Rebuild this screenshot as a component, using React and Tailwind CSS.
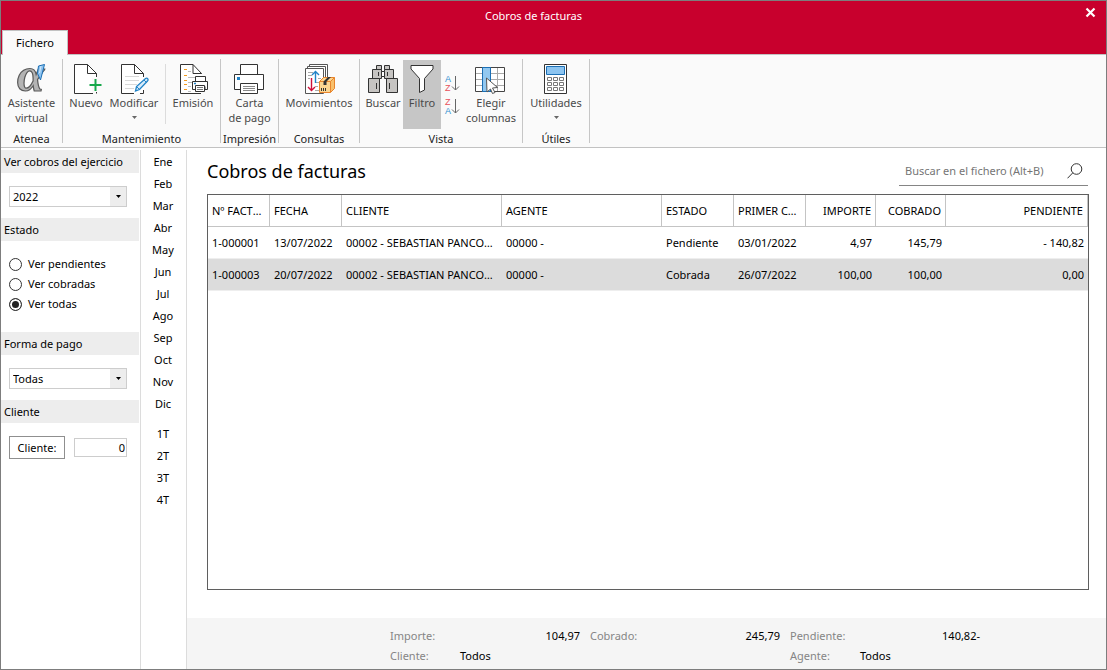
import { useState } from 'react';

const MONTHS = [
  'Ene',
  'Feb',
  'Mar',
  'Abr',
  'May',
  'Jun',
  'Jul',
  'Ago',
  'Sep',
  'Oct',
  'Nov',
  'Dic',
];
const QUARTERS = ['1T', '2T', '3T', '4T'];

const COLUMNS = [
  { key: 'num', label: 'Nº FACTURA', width: 'w-[62px]' },
  { key: 'fecha', label: 'FECHA', width: 'w-[72px]' },
  { key: 'cliente', label: 'CLIENTE', width: 'w-[160px]' },
  { key: 'agente', label: 'AGENTE', width: 'w-[160px]' },
  { key: 'estado', label: 'ESTADO', width: 'w-[72px]' },
  { key: 'primer', label: 'PRIMER COBRO', width: 'w-[72px]' },
  { key: 'importe', label: 'IMPORTE', width: 'w-[70px]', right: true },
  { key: 'cobrado', label: 'COBRADO', width: 'w-[70px]', right: true },
  { key: 'pendiente', label: 'PENDIENTE', width: '', right: true },
];

const ROWS = [
  {
    num: '1-000001',
    fecha: '13/07/2022',
    cliente: '00002 - SEBASTIAN PANCORBO',
    agente: '00000 -',
    estado: 'Pendiente',
    primer: '03/01/2022',
    importe: '4,97',
    cobrado: '145,79',
    pendiente: '- 140,82',
  },
  {
    num: '1-000003',
    fecha: '20/07/2022',
    cliente: '00002 - SEBASTIAN PANCORBO',
    agente: '00000 -',
    estado: 'Cobrada',
    primer: '26/07/2022',
    importe: '100,00',
    cobrado: '100,00',
    pendiente: '0,00',
  },
];

function Icon({ children }) {
  return (
    <svg
      className="h-[30px] w-8 shrink-0 overflow-visible"
      viewBox="0 0 32 30"
      fill="none"
      aria-hidden="true"
    >
      {children}
    </svg>
  );
}

function AlphaIcon() {
  return (
    <Icon>
      <text
        x="1"
        y="27"
        fontFamily="'Liberation Serif', serif"
        fontWeight="bold"
        fontStyle="italic"
        fontSize="49"
        fill="#b4b4b4"
        stroke="#5a5a5a"
        strokeWidth="1.2"
      >
        α
      </text>
      <path d="M22.5 2L28.5 .5L24.5 16L21.5 9.5Z" fill="#8fc4f0" stroke="#1b6fb5" />
      <path d="M25 2L23.5 9" stroke="#d7ebfa" />
    </Icon>
  );
}

function NewIcon() {
  return (
    <Icon>
      <path d="M4.5.5H17.5L26.5 9.5V14H22V29.5H4.5Z" fill="#fff" />
      <path d="M23 29.5H4.5V.5H17.5L26.5 9.5V13M17.5.5V9.5H26.5M26.5 28V29.5" stroke="#333" />
      <path d="M25.5 15V27M19.5 21H31.5" stroke="#17a84b" strokeWidth="2" />
    </Icon>
  );
}

function EditIcon() {
  return (
    <Icon>
      <path d="M3.5.5H16.5L25.5 9.5V29.5H3.5Z" fill="#fff" />
      <path d="M7 12.5H21M7 16.5H21M7 20.5H19M7 24.5H16" stroke="#d8d8d8" />
      <path d="M16 29.5H3.5V.5H16.5L25.5 9.5V13M25.5 26V29.5H22M16.5.5V9.5H25.5" stroke="#333" />
      <path
        d="M17.5 27L18.5 22.5L27.5 14.5C29.5 13.5 31 15.5 29.5 17L21.5 25.5Z"
        fill="#d7ebfa"
        stroke="#2183c7"
        strokeWidth="1.3"
      />
      <path d="M26 16L28.5 18.5M18.5 22.5L21.5 25.5" stroke="#2183c7" />
    </Icon>
  );
}

function EmisionIcon() {
  return (
    <Icon>
      <path d="M3.5.5H16L24.5 9.5V29.5H3.5Z" fill="#fff" />
      <path d="M7 5.5H10M7 11.5H10M7 16.5H10M7 20.5H10M7 25.5H10" stroke="#f39a1e" />
      <path d="M11 7.5H14M11 13.5H19M11 18.5H15M11 22.5H14M11 27.5H14" stroke="#bdbdbd" />
      <path d="M24 29.5H3.5V.5H16L24.5 9.5V10M16 .5V9.5H24.5" stroke="#333" />
      <path d="M18.5 18V12.5H28.5V18" fill="#fff" stroke="#333" />
      <path d="M15.5 17.5H30.5V25.5H28V22.5H19V25.5H15.5Z" fill="#fff" stroke="#333" />
      <path d="M18.5 21.5H27.5V27.5H18.5Z" fill="#fff" stroke="#333" />
      <path d="M20 23.5H26M20 25.5H26" stroke="#777" />
      <path d="M17 19.5H19" stroke="#2183c7" strokeWidth="1.5" />
    </Icon>
  );
}

function PrinterIcon() {
  return (
    <Icon>
      <path d="M6.5 11V.5H23.5V11" fill="#fff" stroke="#333" />
      <path d="M.5 10.5H29.5V25.5H.5Z" fill="#fff" stroke="#333" />
      <path d="M6.5 19.5H23.5V29.5H6.5Z" fill="#fff" stroke="#333" />
      <path d="M9 22.5H21M9 24.5H21M9 26.5H21" stroke="#8a8a8a" />
      <path d="M3 13H6V16H3Z" fill="#2183c7" />
    </Icon>
  );
}

function MovesIcon() {
  return (
    <Icon>
      <path d="M6.5.5H24.5V26H6.5Z" fill="#fff" stroke="#555" />
      <path d="M4.5 2.5H22.5V28H4.5Z" fill="#fff" stroke="#555" />
      <path d="M2.5 4.5H20.5V29.5H2.5Z" fill="#fff" stroke="#555" />
      <path
        d="M5 8.5H10M5 11.5H9M5 14.5H7M15 14.5H18M12 18.5H17M12 22.5H15M12 26.5H16"
        stroke="#aaa"
      />
      <path d="M12.5 19V7.5M9 11L12.5 7.5L16 11" stroke="#2183c7" strokeWidth="1.4" />
      <path d="M8.5 14V26.5M5 23L8.5 26.5L12 23" stroke="#d0103a" strokeWidth="1.4" />
      <path d="M16.5 17.5L20.5 13.5H31.5V24.5L27.5 28.5H16.5Z" fill="#fbd591" />
      <path d="M27.5 17.5L31.5 13.5V24.5L27.5 28.5Z" fill="#f8c06c" />
      <path
        d="M16.5 17.5L20.5 13.5H31.5V24.5L27.5 28.5H16.5ZM16.5 17.5H27.5V28.5M27.5 17.5L31.5 13.5"
        stroke="#e8852c"
        strokeLinejoin="round"
      />
      <path d="M25 13H28L23.5 17.5V21H20.5V17.5Z" fill="#333" />
      <path d="M18.5 24V27M20.5 24V27M22.5 24V27" stroke="#333" />
    </Icon>
  );
}

function BinocularsIcon() {
  return (
    <Icon>
      <g fill="#c6c4c2" stroke="#333">
        <path d="M9.5 1.5H14.5V5.5H9.5ZM17.5 1.5H22.5V5.5H17.5Z" />
        <path d="M5.5 5.5H14.5V14.5H5.5ZM17.5 5.5H26.5V14.5H17.5Z" />
        <path d="M14.5 7.5H17.5V12.5H14.5Z" fill="#fff" />
        <path d="M1.5 14.5H12.5V28.5H1.5ZM19.5 14.5H30.5V28.5H19.5Z" />
        <path d="M9.5 19V25M22.5 19V25M11.5 8V12M20.5 8V12" />
      </g>
    </Icon>
  );
}

function FilterIcon() {
  return (
    <Icon>
      <path
        d="M5 1.5H27V5L18.5 14.5V26L13.5 28.5V14.5L5 5Z"
        fill="#fff"
        stroke="#333"
      />
    </Icon>
  );
}

function ColumnsIcon() {
  return (
    <Icon>
      <path d="M.5 3.5H29.5V27.5H.5Z" fill="#fff" />
      <path d="M.5 9.5H29.5M.5 15.5H29.5M.5 21.5H29.5M22.5 3.5V27.5" stroke="#aaa" />
      <path d="M.5 3.5H29.5V27.5H.5Z" stroke="#444" />
      <path d="M7.5 3.5H15.5V27.5H7.5Z" fill="#92c8f0" stroke="#1b6fb5" />
      <path
        d="M11.5 14L22.5 23.5L17.5 24L20 28.5L17.5 29.5L15.5 25L12 28Z"
        fill="#fff"
        stroke="#555"
      />
    </Icon>
  );
}

function CalculatorIcon() {
  return (
    <Icon>
      <path d="M4.5.5H26.5V29.5H4.5Z" fill="#fff" stroke="#333" />
      <path d="M6.5 2.5H24.5V10.5H6.5Z" fill="#8cc4f0" stroke="#1b6fb5" />
      <g fill="#fff" stroke="#777">
        <path d="M7.5 13.5H11.5V16.5H7.5ZM13.5 13.5H17.5V16.5H13.5ZM19.5 13.5H23.5V16.5H19.5Z" />
        <path d="M7.5 18.5H11.5V21.5H7.5ZM13.5 18.5H17.5V21.5H13.5ZM19.5 18.5H23.5V21.5H19.5Z" />
        <path d="M7.5 23.5H11.5V26.5H7.5ZM13.5 23.5H17.5V26.5H13.5ZM19.5 23.5H23.5V26.5H19.5Z" />
      </g>
    </Icon>
  );
}

function SortIcon({ top, bottom, topColor, bottomColor }) {
  return (
    <svg
      className="h-[17px] w-4 overflow-visible"
      viewBox="0 0 16 17"
      fill="none"
      aria-hidden="true"
    >
      <g fontFamily="'Liberation Sans', sans-serif" fontSize="9">
        <text x="1" y="7" fill={topColor}>
          {top}
        </text>
        <text x="1" y="16" fill={bottomColor}>
          {bottom}
        </text>
      </g>
      <path d="M11.5 1V15M8 11.5L11.5 15L15 11.5" stroke="#666" />
    </svg>
  );
}

function RibbonGroup({ label, width, children }) {
  return (
    <section
      aria-label={label}
      className={`flex h-[84px] shrink-0 flex-col border-r border-[#c6c6c6] pt-px ${width}`}
    >
      <div className="flex h-[69px] shrink-0 justify-center">{children}</div>
      <div className="mt-1 text-center leading-3 whitespace-nowrap text-[#222]">{label}</div>
    </section>
  );
}

function RibbonButton({ icon, lines, width, arrow, active }) {
  return (
    <button
      type="button"
      className={`flex flex-col items-center pt-1 whitespace-nowrap text-[#4a4a4a] ${width} ${
        active ? 'bg-[#c6c6c6]' : 'hover:bg-[#ececec]'
      }`}
    >
      {icon}
      <span className="mt-px leading-[15px]">
        {lines.map(line => (
          <span className="block" key={line}>
            {line}
          </span>
        ))}
      </span>
      {arrow && (
        <svg className="mt-1.5 h-[3px] w-[5px]" viewBox="0 0 5 3" aria-hidden="true">
          <path d="M0 0H5L2.5 3Z" fill="#666" />
        </svg>
      )}
    </button>
  );
}

function Ribbon() {
  return (
    <div className="flex h-[94px] shrink-0 border-y border-[#c2c2c2] bg-[#fafafa] pt-1">
      <RibbonGroup label="Atenea" width="w-[62px]">
        <RibbonButton icon={<AlphaIcon />} lines={['Asistente', 'virtual']} width="w-full" />
      </RibbonGroup>
      <RibbonGroup label="Mantenimiento" width="w-[158px]">
        <RibbonButton icon={<NewIcon />} lines={['Nuevo']} width="w-[46px]" />
        <RibbonButton icon={<EditIcon />} lines={['Modificar']} width="w-[50px]" arrow />
        <div className="mt-1 ml-1.5 h-[60px] w-px bg-[#dcdcdc]" />
        <RibbonButton icon={<EmisionIcon />} lines={['Emisión']} width="w-[54px]" />
      </RibbonGroup>
      <RibbonGroup label="Impresión" width="w-[58px]">
        <RibbonButton icon={<PrinterIcon />} lines={['Carta', 'de pago']} width="w-full" />
      </RibbonGroup>
      <RibbonGroup label="Consultas" width="w-[81px]">
        <RibbonButton icon={<MovesIcon />} lines={['Movimientos']} width="w-full" />
      </RibbonGroup>
      <RibbonGroup label="Vista" width="w-[163px]">
        <RibbonButton icon={<BinocularsIcon />} lines={['Buscar']} width="w-10" />
        <RibbonButton icon={<FilterIcon />} lines={['Filtro']} width="w-[38px]" active />
        <div className="flex w-[22px] flex-col items-center gap-1.5 pt-[15px]">
          <button type="button" aria-label="Orden ascendente">
            <SortIcon top="A" bottom="Z" topColor="#2e8fd0" bottomColor="#e8505b" />
          </button>
          <button type="button" aria-label="Orden descendente">
            <SortIcon top="Z" bottom="A" topColor="#e8505b" bottomColor="#2e8fd0" />
          </button>
        </div>
        <RibbonButton icon={<ColumnsIcon />} lines={['Elegir', 'columnas']} width="w-14" />
      </RibbonGroup>
      <RibbonGroup label="Útiles" width="w-[67px]">
        <RibbonButton icon={<CalculatorIcon />} lines={['Utilidades']} width="w-full" arrow />
      </RibbonGroup>
    </div>
  );
}

function PanelTitle({ children }) {
  return <h2 className="h-[23px] bg-[#ededed] pl-[3px] leading-[23px]">{children}</h2>;
}

function Select({ label, options }) {
  return (
    <div className="relative mx-2 h-[21px] w-[118px] border border-[#cdcdcd]">
      <select aria-label={label} className="h-full w-full appearance-none pl-[3px] outline-none">
        {options.map(option => (
          <option key={option}>{option}</option>
        ))}
      </select>
      <span className="pointer-events-none absolute inset-y-0 right-0 flex w-4 items-center justify-center bg-[#ededed]">
        <svg className="h-[3px] w-[5px]" viewBox="0 0 5 3" aria-hidden="true">
          <path d="M0 0H5L2.5 3Z" fill="#000" />
        </svg>
      </span>
    </div>
  );
}

function Sidebar() {
  const [estado, setEstado] = useState('Ver todas');

  return (
    <aside className="w-[138px] shrink-0">
      <PanelTitle>Ver cobros del ejercicio</PanelTitle>
      <div className="h-[45px] pt-[13px]">
        <Select label="Ejercicio" options={['2022', '2021', '2020']} />
      </div>

      <PanelTitle>Estado</PanelTitle>
      <div className="h-[91px] px-2 pt-[13px]">
        {['Ver pendientes', 'Ver cobradas', 'Ver todas'].map(item => (
          <label className="flex h-5 items-center gap-1.5" key={item}>
            <input
              type="radio"
              name="estado"
              checked={estado === item}
              onChange={() => setEstado(item)}
              className="h-[13px] w-[13px] appearance-none rounded-full border border-[#333] bg-white checked:bg-[#222] checked:shadow-[inset_0_0_0_2px_#fff]"
            />
            {item}
          </label>
        ))}
      </div>

      <PanelTitle>Forma de pago</PanelTitle>
      <div className="h-[45px] pt-[13px]">
        <Select label="Forma de pago" options={['Todas', 'Contado', 'Transferencia']} />
      </div>

      <PanelTitle>Cliente</PanelTitle>
      <div className="flex items-center gap-[9px] px-2 pt-[13px]">
        <button type="button" className="h-[23px] w-14 border border-[#8f8f8f]">
          Cliente:
        </button>
        <input
          aria-label="Código de cliente"
          defaultValue="0"
          className="h-[19px] w-[53px] border border-[#cdcdcd] pr-px text-right outline-none"
        />
      </div>
    </aside>
  );
}

function Periods() {
  const item = 'block h-[22px] w-full pr-px text-center';
  return (
    <nav className="ml-px w-[47px] shrink-0 border-x border-[#dcdcdc] pt-px">
      {MONTHS.map(month => (
        <button type="button" className={item} key={month}>
          {month}
        </button>
      ))}
      <div className="pt-2">
        {QUARTERS.map(quarter => (
          <button type="button" className={item} key={quarter}>
            {quarter}
          </button>
        ))}
      </div>
    </nav>
  );
}

function InvoiceTable() {
  const [selected, setSelected] = useState('1-000003');

  return (
    <div className="min-h-0 flex-1 overflow-auto border border-[#5f5f5f]">
      <table className="w-full table-fixed border-separate border-spacing-0">
        <thead>
          <tr>
            {COLUMNS.map(col => (
              <th
                key={col.key}
                className={`h-8 truncate border-r border-b border-[#c4c4c4] px-1 font-normal ${col.width} ${
                  col.right ? 'text-right' : 'text-left'
                }`}
              >
                {col.label}
              </th>
            ))}
          </tr>
        </thead>
        <tbody>
          {ROWS.map(row => (
            <tr
              key={row.num}
              onClick={() => setSelected(row.num)}
              className={selected === row.num ? 'bg-[#dcdcdc]' : ''}
            >
              {COLUMNS.map(col => (
                <td
                  key={col.key}
                  className={`h-8 truncate border-b border-[#eeeeee] px-1 ${
                    col.right ? 'text-right' : 'text-left'
                  }`}
                >
                  {row[col.key]}
                </td>
              ))}
            </tr>
          ))}
        </tbody>
      </table>
    </div>
  );
}

function SummaryItem({ label, value, text }) {
  return (
    <div className="flex h-5 w-[200px] items-center pr-2.5">
      <span className="w-[70px] text-[#858585]">{label}</span>
      <span className={text ? '' : 'flex-1 text-right'}>{value}</span>
    </div>
  );
}

function Summary() {
  return (
    <footer className="h-[51px] shrink-0 bg-[#f5f5f5] pt-2 pl-[203px]">
      <div className="flex">
        <SummaryItem label="Importe:" value="104,97" />
        <SummaryItem label="Cobrado:" value="245,79" />
        <SummaryItem label="Pendiente:" value="140,82-" />
      </div>
      <div className="flex">
        <div className="w-[400px]">
          <SummaryItem label="Cliente:" value="Todos" text />
        </div>
        <SummaryItem label="Agente:" value="Todos" text />
      </div>
    </footer>
  );
}

function App() {
  return (
    <div className="flex h-screen min-h-[560px] flex-col border border-[#7d7d7d] bg-white font-['Noto_Sans',sans-serif] text-[11px] leading-4 text-black">
      <header className="flex h-[53px] shrink-0 flex-col justify-between bg-[#c8002d]">
        <div className="grid grid-cols-[1fr_auto_1fr] items-start">
          <h1 className="col-start-2 pt-[7px] pr-10 text-white">Cobros de facturas</h1>
          <button
            type="button"
            aria-label="Cerrar"
            className="mt-1.5 mr-2.5 justify-self-end text-white"
          >
            <svg className="h-[11px] w-[11px]" viewBox="0 0 11 11" aria-hidden="true">
              <path d="M1.5 1.5L9.5 9.5M9.5 1.5L1.5 9.5" stroke="currentColor" strokeWidth="2.2" />
            </svg>
          </button>
        </div>
        <div className="z-10 -mb-px flex pl-px">
          <button
            type="button"
            className="h-[25px] w-[66px] border border-b-0 border-[#c2c2c2] bg-[#fafafa]"
          >
            Fichero
          </button>
        </div>
      </header>

      <Ribbon />

      <div className="flex min-h-0 flex-1 pt-0.5">
        <Sidebar />
        <Periods />
        <main className="flex min-w-0 flex-1 flex-col">
          <div className="flex min-h-0 flex-1 flex-col pr-[17px] pb-7 pl-5">
            <div className="flex h-11 shrink-0 items-start justify-between pt-1.5">
              <h2 className="pt-px text-lg leading-7">Cobros de facturas</h2>
              <div className="mr-px flex h-[30px] w-[189px] items-center border-b border-[#858585]">
                <input
                  type="search"
                  aria-label="Buscar en el fichero"
                  placeholder="Buscar en el fichero (Alt+B)"
                  className="min-w-0 flex-1 pl-1.5 outline-none placeholder:text-[#757575]"
                />
                <button type="button" aria-label="Buscar" className="mr-[5px]">
                  <svg className="h-4 w-4" viewBox="0 0 16 16" fill="none" aria-hidden="true">
                    <circle cx="9.5" cy="6" r="5.3" stroke="#333" />
                    <path d="M5.8 9.8L.5 15.3" stroke="#333" />
                  </svg>
                </button>
              </div>
            </div>
            <InvoiceTable />
          </div>
          <Summary />
        </main>
      </div>
    </div>
  );
}

export default App;
